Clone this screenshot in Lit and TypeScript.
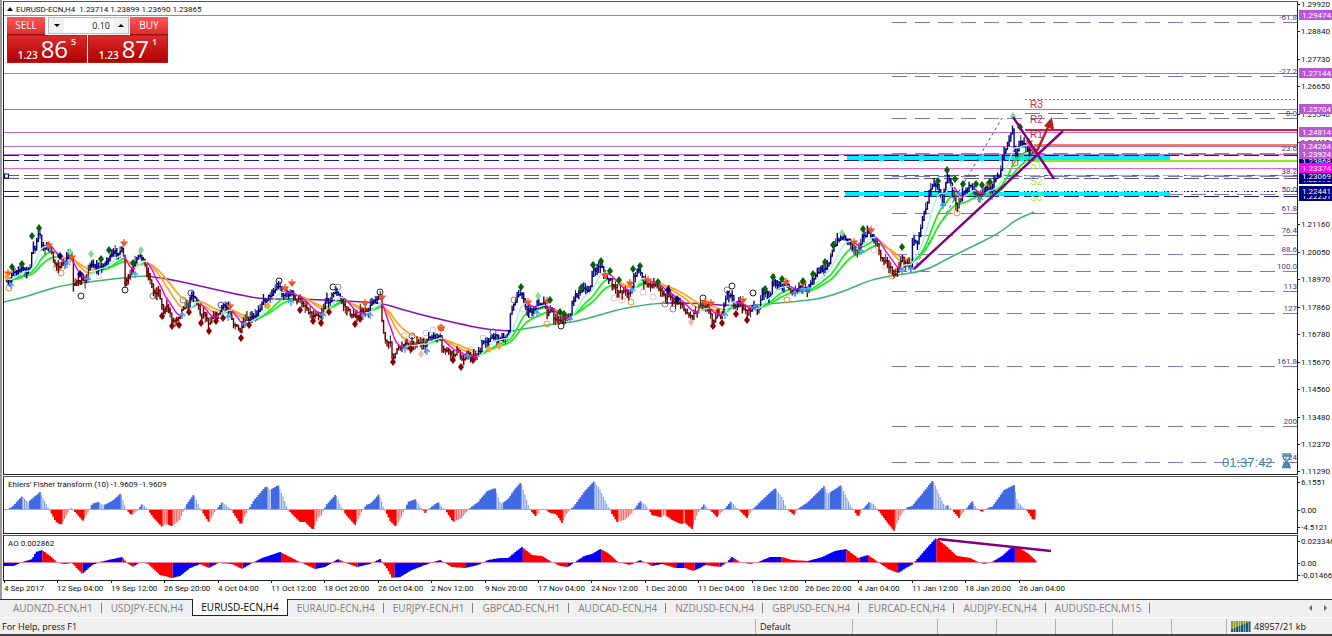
import { LitElement, html, svg, css } from "lit";
import { customElement } from "lit/decorators.js";

type Pt = [number, number];

const parse = (s: string): Pt[] =>
  s.trim().split(/\s+/).map((p) => p.split(",").map(Number) as Pt);

const at = (pts: Pt[], x: number): number => {
  if (x <= pts[0][0]) return pts[0][1];
  for (let i = 1; i < pts.length; i++) {
    const [x0, y0] = pts[i - 1];
    const [x1, y1] = pts[i];
    if (x <= x1) return y0 + ((y1 - y0) * (x - x0)) / (x1 - x0 || 1);
  }
  return pts[pts.length - 1][1];
};

const smooth = (pts: Pt[]): string => {
  let d = `M${pts[0][0]} ${pts[0][1]}`;
  for (let i = 1; i < pts.length - 1; i++) {
    const [x, y] = pts[i];
    const [nx, ny] = pts[i + 1];
    d += `Q${x} ${y} ${(x + nx) / 2} ${(y + ny) / 2}`;
  }
  const last = pts[pts.length - 1];
  return `${d}L${last[0]} ${last[1]}`;
};

/* Width of one H4 bar. */
const STEP = 1.668;

const PRICE = parse(`4,278 10,282 12,272 22,268 28,273 31,265 32,245 35,250 39,232 42,245 47,248 50,245 53,262 59,265 63,267
69,255 72,258 73,283 80,283 83,279 86,280 91,262 97,268 101,268 108,260 115,253 123,250 125,285 128,280 133,268 141,253
145,265 150,278 154,293 159,290 163,312 168,307 173,322 180,315 184,305 188,307 192,293 197,300 201,317 204,312 209,323
213,315 218,317 222,307 230,308 233,323 241,332 245,321 255,317 262,303 268,298 279,285 283,295 292,293 295,300 300,300
307,308 313,317 316,312 321,317 325,302 330,300 335,291 340,297 347,310 354,317 360,313 368,313 373,300 380,295 383,330
386,343 390,343 393,357 398,350 405,343 412,345 418,342 425,348 427,338 442,338 442,348 448,352 453,355 458,350 461,360
467,355 473,357 480,353 483,342 493,338 508,337 510,317 514,302 522,292 525,308 533,312 538,302 545,303 548,317 551,307
554,317 561,320 570,318 573,300 578,292 590,289 593,272 602,265 605,277 610,280 615,290 628,292 632,292 633,277 640,270
643,282 653,285 660,287 665,298 669,293 673,302 680,302 683,308 691,317 697,310 702,303 708,308 713,322 717,312 722,318
727,293 732,297 735,307 740,303 747,313 753,307 758,310 761,298 765,293 770,295 773,283 782,285 787,285 793,293 800,288
808,290 813,280 820,270 828,265 833,250 840,236 848,239 857,252 862,238 868,233 877,243 880,257 887,262 893,272 898,272
902,255 905,265 911,265 912,243 918,242 920,235 922,220 927,203 930,188 933,183 938,185 943,202 947,177 952,187 957,207
963,192 970,183 975,193 982,197 988,183 992,195 995,177 1000,175 1003,155 1008,145 1013,128 1015,158 1020,143 1027,147
1032,150 1034,163`);

const LONG_A = parse("4,302 22,298 40,292 60,286 80,283 105,280 130,277 146,276");
const LONG_B = parse("146,276 165,278 200,286 240,295 262,299 300,299 345,301 382,303 400,309 430,317 465,325 490,330 514,331");
const LONG_C = parse("512,331 545,325 575,322 600,315 620,309 650,304 668,303");
const LONG_D = parse("665,303 690,303 720,305 757,306");
const LONG_E = parse("755,305 790,302 820,299 845,291 870,280 890,276 925,271 945,260 965,250 1000,233 1015,220 1034,212");

const FISHER = parse(`4,511 12,507 22,496 28,502 40,492 46,503 50,511 56,522 61,525 68,513 71,508 74,511 83,521 88,513 92,504
98,502 104,505 112,501 121,493 126,509 131,515 138,510 142,504 147,508 152,516 162,527 166,524 172,526 180,520 186,505
194,494 200,508 209,523 215,512 222,502 230,508 241,525 248,510 254,500 266,486 270,490 278,485 284,498 288,510 300,522
305,522 313,530 318,518 322,515 326,505 336,494 342,508 346,515 355,525 361,514 366,505 371,503 379,494 384,508 390,521
396,527 402,516 408,502 415,499 421,507 425,513 430,508 438,502 446,511 453,522 462,518 470,508 478,502 487,491 495,488
501,504 508,499 514,490 521,482 527,500 530,510 536,517 541,509 545,509 550,513 556,514 562,523 568,512 574,506 584,492
594,481 600,489 608,506 612,514 617,522 625,520 632,513 640,501 646,505 652,515 660,517 665,515 672,520 681,524 685,523
692,529 698,513 704,504 709,509 717,517 724,510 731,501 738,509 747,518 753,509 762,500 775,488 783,498 787,509 794,515
799,508 808,502 824,486 828,494 841,485 850,504 858,517 863,509 869,502 874,504 878,510 886,521 894,531 901,515 906,508
912,506 933,480 940,496 945,506 948,505 952,510 959,518 964,512 972,501 977,508 982,512 986,509 990,507 992,507 1004,490
1014,485 1018,502 1023,507 1028,512 1033,520 1036,518`);

const AO = parse(`4,566 14,566 22,562 32,559 36,552 42,550 50,556 58,563 65,564 72,563 82,574 92,565 100,562 108,560 122,557
128,564 133,567 140,562 148,564 160,575 172,578 180,576 190,568 200,564 209,568 218,563 232,564 242,569 252,563 262,558
280,552 290,557 300,562 315,569 325,567 338,559 346,563 357,567 370,564 380,559 388,570 392,578 400,577 412,570 425,565
440,560 452,567 465,568 478,565 488,560 500,558 508,558 514,553 522,547 532,555 542,556 550,561 560,566 568,567 578,560
584,556 592,554 600,549 608,553 618,562 630,565 640,560 652,566 662,564 675,568 685,568 693,571 700,568 705,565 720,567
727,562 732,557 740,562 750,564 758,562 770,557 782,557 792,560 808,561 822,557 835,551 846,549 858,558 868,555 878,562
888,569 898,573 906,568 913,564 925,550 936,538 946,546 957,556 970,558 978,562 984,564 992,562 1002,556 1013,546
1023,550 1030,555 1036,561`);

/* Fractal diamonds, grouped by fill. */
const DIAMONDS: Record<string, Pt[]> = {
  "#006400": parse(`12,267 22,264 32,236 39,228 101,259 109,250 133,263 521,287 550,300 560,312 564,314 581,288 593,265
601,261 610,271 619,280 633,269 640,266 658,282 765,289 773,277 782,279 803,281 813,274 825,262 833,245 863,229 902,247
938,181 947,170 955,179 963,184 976,184 982,185 990,182 1020,127`),
  "#7ee08a": parse("70,252 91,254 141,250 538,296 842,233 1013,116"),
  "#00008b": parse("60,256 80,274 668,290 677,299"),
  "#8b0000": parse(`162,316 172,326 179,325 189,312 201,323 209,331 216,321 223,318 241,338 249,325 300,310 313,321
321,323 329,312 355,324 360,319 393,362 411,349 453,360 461,367 473,360 713,326 722,323 736,314 747,320`),
  "#ffa31a": parse("268,306 489,349 499,346 7,277"),
  "#ffb0b0": parse("421,354 691,322"),
};

const RINGS: Record<string, Pt[]> = {
  "#222": parse("81,296 125,290 279,281 333,287 380,292 561,326 703,298 732,286 753,293"),
  "#888": parse("153,296 338,287 183,300 514,300 665,304 673,309 727,290"),
  "#4a4ad8": parse("191,293 221,305 412,336 493,332"),
  "#f0902a": parse("61,273 9,288 547,324 631,302 787,300 892,276 957,213"),
  "#ffb9b9": parse("56,268 99,276 523,309 614,298 622,300 643,292 653,297 826,270 874,250 885,266"),
  "#a5dcc0": parse("404,336 427,342"),
  "#aed4e4": parse("426,333 433,330 483,338 470,350"),
  "#ee3b2b": parse("531,315 1015,163 441,328"),
};

const DOWN = parse(`8,273 49,245 72,257 124,243 230,306 285,288 292,283 365,303 382,297 441,328 528,302 547,301 605,275
630,283 648,280 705,302 711,303 743,300 786,282 803,283 854,242 871,230 989,184 1029,142 1034,150`);
const UP = parse(`11,286 67,265 88,280 135,275 182,316 228,318 245,325 291,303 323,316 363,317 370,316 405,350 427,352
468,357 537,314 570,320 632,291 725,316 755,308 795,294 803,291 808,290 861,252 902,271 911,270 943,206 980,200 992,197`);

/* Fibonacci levels: y of the line and its caption. */
const FIBS: [number, string][] = [
  [22, "-61.8"], [76, "-27.2"], [118, "0.0"], [153, "23.6"], [176, "38.2"], [194, "50.0"], [213, "61.8"], [235, "76.4"],
  [254, "88.6"], [271, "100.0"], [291, "113"], [313, "127"], [366, "161.8"], [426, "200"], [462, "224"],
];

const TICKS: [number, string][] = [
  [4, "1.29920"], [31, "1.28840"], [59, "1.27730"], [86, "1.26650"], [114, "1.25540"], [142, "1.24460"], [224, "1.21160"],
  [252, "1.20050"], [279, "1.18970"], [307, "1.17860"], [334, "1.16780"], [362, "1.15670"], [389, "1.14560"],
  [417, "1.13480"], [444, "1.12370"], [471, "1.11290"],
];

const TAGS: [number, string, string][] = [
  [196, "1.22251", "#000080"], [191, "1.22441", "#000080"], [179, "1.22978", "#000080"], [161, "1.23868", "#000080"],
  [176, "1.23069", "#000080"], [168, "1.23374", "#ff00ff"], [154, "1.23924", "#ba55d3"], [146, "1.24264", "#ba55d3"],
  [132, "1.24814", "#ba55d3"], [109, "1.25704", "#ba55d3"], [73, "1.27144", "#ba55d3"], [15, "1.29474", "#ba55d3"],
];

const DATES = ["4 Sep 2017", "12 Sep 04:00", "19 Sep 12:00", "26 Sep 20:00", "4 Oct 04:00", "11 Oct 12:00", "18 Oct 20:00",
  "26 Oct 04:00", "2 Nov 12:00", "9 Nov 20:00", "17 Nov 04:00", "24 Nov 12:00", "1 Dec 20:00", "11 Dec 04:00",
  "18 Dec 12:00", "26 Dec 20:00", "4 Jan 04:00", "11 Jan 12:00", "18 Jan 20:00", "26 Jan 04:00"];

const TABS = ["AUDNZD-ECN,H1", "USDJPY-ECN,H4", "EURUSD-ECN,H4", "EURAUD-ECN,H4", "EURJPY-ECN,H1", "GBPCAD-ECN,H1",
  "AUDCAD-ECN,H4", "NZDUSD-ECN,H4", "GBPUSD-ECN,H4", "EURCAD-ECN,H4", "AUDJPY-ECN,H4", "AUDUSD-ECN,M15"];

/* Builds candles and the moving-average ribbon from the price track. */
function build() {
  const bars: { x: number; y: number; top: number; bottom: number }[] = [];
  let seed = 7;
  const rnd = () => ((seed = (seed * 16807) % 2147483647) / 2147483647);
  for (let x = 5; x <= 1034; x += STEP) {
    const y = at(PRICE, x);
    const jitter = (rnd() - 0.5) * 5;
    bars.push({ x, y: y + jitter, top: y + jitter - 1 - rnd() * 6, bottom: y + jitter + 1 + rnd() * 6 });
  }
  const ema = (n: number) => {
    let a = bars[0].y + 4;
    let b = a;
    return bars.map((p) => {
      a += (p.y - a) * (2 / (n + 1));
      b += (a - b) * 0.3;
      return [p.x, b] as Pt;
    });
  };
  return { bars, fast: ema(5), mid: ema(14), slow: ema(25) };
}

/* Splits a line into runs so that rising and falling parts differ in colour. */
function runs(line: Pt[], up: string, down: string, width: number) {
  const out: { d: string; c: string }[] = [];
  let cur = "";
  line.forEach((p, i) => {
    if (!i) return;
    const prev = line[i - 1];
    const back = line[Math.max(0, i - 3)];
    const c = p[1] <= back[1] ? up : down;
    const to = `L${p[0].toFixed(1)} ${p[1].toFixed(1)}`;
    if (c !== cur) {
      out.push({ c, d: `M${prev[0].toFixed(1)} ${prev[1].toFixed(1)}${to}` });
      cur = c;
    } else out[out.length - 1].d += to;
  });
  return out.map((r) => svg`<path d=${r.d} fill="none" stroke=${r.c} stroke-width=${width}></path>`);
}

function candles() {
  const { bars, fast, mid, slow } = build();
  const paths: Record<string, string> = { "#000080": "", "#6e0000": "", "#3c3c3c": "" };
  let wicks = "";
  bars.forEach((b, i) => {
    if (!i) return;
    const p = bars[i - 1];
    const s = slow[i][1];
    const m = mid[i][1];
    const hi = Math.min(s, m);
    const lo = Math.max(s, m);
    const c = b.y < hi + 1 ? "#000080" : b.y > lo - 1 ? "#6e0000" : "#3c3c3c";
    paths[c] += `M${p.x.toFixed(1)} ${p.y.toFixed(1)}H${b.x.toFixed(1)}V${b.y.toFixed(1)}`;
    if (i % 3 === 0) wicks += `M${b.x.toFixed(1)} ${b.top.toFixed(1)}V${b.bottom.toFixed(1)}`;
    else paths[c] += `M${b.x.toFixed(1)} ${b.top.toFixed(1)}V${b.bottom.toFixed(1)}`;
  });
  return svg`
    ${runs(slow, "#14f014", "#ffa020", 1.7)}
    ${runs(mid, "#14f014", "#ffa020", 1.7)}
    <path d=${wicks} stroke="#222" stroke-width="1"></path>
    ${Object.keys(paths).map((c) => svg`<path d=${paths[c]} fill="none" stroke=${c} stroke-width="1.4"></path>`)}
    ${runs(fast, "#a8f0ee", "#f000dc", 1.4)}`;
}

function histogram(track: Pt[], base: number, kind: "fisher" | "ao") {
  const out: Record<string, string> = {};
  for (let x = 4; x <= 1035; x += STEP) {
    const y = at(track, x + 0.8);
    const prev = at(track, x + 0.8 - STEP);
    let c: string;
    let w = STEP + 0.1;
    if (kind === "fisher") {
      const fade = Math.abs(y - base) < Math.abs(prev - base) - 0.2;
      c = y < base ? (fade ? "#7f9cf0" : "#4169e1") : fade ? "#ff5a5a" : "#ff0000";
      if (fade) w = 1.1;
    } else c = y > prev ? "#ff0000" : "#0000ff";
    const top = Math.min(y, base);
    const h = Math.max(Math.abs(y - base), 0.6);
    out[c] = (out[c] || "") + `M${x.toFixed(2)} ${top.toFixed(1)}h${w.toFixed(2)}v${h.toFixed(1)}h-${w.toFixed(2)}z`;
  }
  return Object.keys(out).map((c) => svg`<path d=${out[c]} fill=${c}></path>`);
}

@customElement("app-root")
export class AppRoot extends LitElement {
  static styles = css`
    :host { display: block; min-height: 100vh; background: #f0f0f0; color: #111; font-family: "Open Sans", "Noto Sans", sans-serif; }
    * { box-sizing: border-box; }
    button, input { font-family: inherit; margin: 0; padding: 0; border: 0; border-radius: 0; }
    .app { display: flex; flex-direction: column; min-height: 100vh; border-bottom: 2px solid #444; }
    .workspace { background: #fff; border-left: 2px solid #999; padding: 1px 0 0 1px; }
    .pane { position: relative; display: grid; grid-template-columns: minmax(0, 1fr) 34px; }
    .plot { border: 1px solid #222; border-top-color: #555; overflow: hidden; }
    .plot > svg, .scale > svg { display: block; width: 100%; overflow: hidden; }
    .main .plot > svg { height: 472px; }
    .fisher, .ao { margin-top: 1px; }
    .fisher .plot > svg { height: 56px; }
    .ao .plot > svg { height: 44px; }
    .dates svg { display: block; width: 100%; height: 18px; }
    svg text { font-family: Roboto, "Open Sans", sans-serif; font-size: 8px; fill: #111; }
    svg .fib { fill: #483d8b; }
    svg .tag { fill: #fff; }
    svg .pivot { font-family: "Liberation Sans", sans-serif; font-size: 10px; }
    svg .res { fill: #d02848; }
    svg .sup-level { fill: #a4ec3c; }
    svg .clock { font-family: "Liberation Sans", sans-serif; font-size: 13px; fill: #3b87a8; }
    .crisp { shape-rendering: crispEdges; }

    .trade { position: absolute; left: 3px; top: 15px; width: 162px; height: 48px; background: #fff; display: grid; grid-template-columns: 80px 80px; gap: 1px; padding: 1px 0 0 1px; }
    .deal { display: flex; flex-direction: column; align-items: flex-start; background: none; color: #fff; cursor: pointer; }
    .deal.buy { align-items: flex-end; }
    .side { width: 38px; height: 18px; line-height: 17px; font-size: 10px; background: linear-gradient(#f55, #dc3030); border-bottom: 1px solid #a01010; }
    .quote { display: flex; justify-content: center; align-items: flex-end; gap: 3px; width: 80px; height: 28px; background: linear-gradient(#dc2a2a, #b00000); border: 1px solid #c01818; }
    .small { font-size: 10px; line-height: 14px; font-weight: 600; }
    .big { font-size: 24px; line-height: 26px; }
    .sup { font-size: 9px; line-height: 12px; align-self: flex-start; font-weight: 600; }
    .volume { position: absolute; left: 42px; top: 1px; display: flex; width: 81px; height: 17px; border: 1px solid #bbb; background: #fff; }
    .volume input { flex: 1; min-width: 0; font-size: 9px; text-align: right; padding-right: 3px; color: #111; }
    .volume button { width: 15px; background: #f0f0f0; display: grid; place-items: center; }

    .tabs { display: flex; align-items: stretch; height: 17px; border-top: 1px solid #333; padding-left: 4px; }
    .tab { position: relative; padding: 0 9px; font-size: 10px; line-height: 15px; color: #808080; background: none; white-space: nowrap; }
    .tab::after { content: ""; position: absolute; right: 0; top: 3px; height: 10px; border-right: 1px solid #808080; }
    .tab.on { background: #fff; color: #000; border: 1px solid #222; border-top: 0; margin-top: -1px; padding: 0 8px; line-height: 16px; }
    .tab.on::after, .tab.pre::after { display: none; }
    .arrows { margin-left: auto; display: flex; gap: 9px; align-items: center; padding-right: 4px; }
    .arrows button { width: 6px; height: 10px; background: none; display: grid; place-items: center; }
    .status { flex: 1; display: flex; align-items: center; font-size: 9px; color: #111; border-top: 1px solid #fafafa; margin-top: 1px; }
    .cell { height: 15px; line-height: 15px; border-left: 1px solid #b0b0b0; padding-left: 4px; display: flex; align-items: center; gap: 3px; white-space: nowrap; }
    .help { flex: 1; border: 0; padding-left: 2px; }
    .c97 { width: 97px; } .c85 { width: 85px; } .c59 { width: 59px; } .c57 { width: 57px; } .c55 { width: 55px; } .c106 { width: 106px; }
  `;

  private line(y: number, color: string, o: { from?: number; dash?: string; w?: number } = {}) {
    return svg`<line class="crisp" x1=${(o.from ?? 4) - 4} x2="100%" y1=${y + 0.5} y2=${y + 0.5} stroke=${color}
      stroke-width=${o.w ?? 1} stroke-dasharray=${o.dash ?? "none"}></line>`;
  }

  private mainPlot() {
    return svg`<svg role="img" aria-label="EURUSD-ECN H4 price chart">
      <g transform="translate(0 -2)">
        ${[15, 73, 109, 132, 146, 154].map((y) => this.line(y, "#ba6ad3"))}
        ${this.line(168, "#e060d8")}
        ${FIBS.map(([y]) => this.line(y, "#7f78b8", { from: 892, dash: "15 8" }))}
        <rect x="843" y="155" width="323" height="6" fill="#00f0ff"></rect>
        <rect x="841" y="192" width="325" height="4" fill="#00f0ff"></rect>
        ${[155, 160, 191, 196].map((y) => this.line(y, "#1c1c80", { dash: "15 5" }))}
        ${[175, 178].map((y) => this.line(y, "#54549c", { dash: "15 5" }))}
        ${this.line(99, "#dc4060", { from: 1025, dash: "2 2" })}
        ${this.line(113, "#dc4060", { from: 1025, dash: "15 8" })}
        ${this.line(129, "#e01838", { from: 1025, w: 2 })}
        ${this.line(144, "#f08050", { from: 1034, w: 2 })}
        ${this.line(160, "#90e820", { from: 1034, w: 2 })}
        ${this.line(175, "#9acd32", { from: 1025, dash: "15 8" })}
        ${this.line(191, "#adff2f", { from: 1025, dash: "2 2" })}
      </g>
      <g transform="translate(-4 -2)">
        <rect x="4.5" y="174" width="4" height="4" fill="#fff" stroke="#000080"></rect>
        ${[LONG_A, LONG_C, LONG_E].map((l) => svg`<path d=${smooth(l)} fill="none" stroke="#3cb371" stroke-width="1.5"></path>`)}
        ${[LONG_B, LONG_D].map((l) => svg`<path d=${smooth(l)} fill="none" stroke="#8a10b8" stroke-width="1.6"></path>`)}
        <path d="M913 270L1002 118" stroke="#4848a0" stroke-dasharray="3 3" stroke-width="1"></path>
        ${Object.keys(RINGS).map((c) => RINGS[c].map(([x, y]) => svg`<circle cx=${x} cy=${y} r="3" fill="none" stroke=${c} stroke-width="1"></circle>`))}
        ${candles()}
        ${UP.map(([x, y]) => svg`<path d="M${x} ${y + 3}V${y - 3}M${x - 3} ${y}L${x} ${y - 3}L${x + 3} ${y}" fill="none" stroke="#3c9cff" stroke-width="1.4"></path>`)}
        ${DOWN.map(([x, y]) => svg`<path d="M${x} ${y - 4}V${y}M${x - 3} ${y - 1}L${x} ${y + 3}L${x + 3} ${y - 1}Z" fill="#ff5a28" stroke="#f04e20" stroke-width="1.2"></path>`)}
        ${Object.keys(DIAMONDS).map((c) => DIAMONDS[c].map(([x, y]) => svg`<path d="M${x} ${y - 4}L${x + 3} ${y}L${x} ${y + 4}L${x - 3} ${y}Z" fill=${c}></path>`))}
        <path d="M914 269L1063 131M1013 117L1054 179" stroke="#800080" stroke-width="2.4" fill="none"></path>
        <path d="M1037 151L1049 125" stroke="#b22222" stroke-width="2.4"></path>
        <path d="M1052 117L1044 126L1054 130Z" fill="#b22222"></path>
        ${["R3", "R2", "R1"].map((t, i) => svg`<text class="pivot res" x="1030" y=${108 + i * 15}>${t}</text>`)}
        ${["S1", "S2", "S3"].map((t, i) => svg`<text class="pivot sup-level" x="1030" y=${169 + i * 16}>${t}</text>`)}
        <path d="M10 7L13 11H7Z" fill="#111"></path>
        <text x="16" y="12">EURUSD-ECN,H4&#160;&#160;1.23714 1.23899 1.23690 1.23865</text>
      </g>
      ${FIBS.map(([y, t]) => svg`<text class="fib" x="100%" y=${y - 4} text-anchor="end">${t}</text>`)}
      <svg x="100%" y="450" width="80" height="20" overflow="visible">
        <text class="clock" x="-75" y="15">01:37:42</text>
        <path d="M-15 2H-6M-15 4H-6M-14 4C-14 8 -11 8 -11 9.500S-14 11 -14 15M-7 4C-7 8 -10 8 -10 9.500S-7 11 -7 15M-15 15.500H-6M-13 14L-10.500 11L-8 14Z" fill="none" stroke="#3b87a8" stroke-width="1.3"></path>
      </svg>
    </svg>`;
  }

  private ticket() {
    return html`
      <div class="trade">
        <button class="deal" aria-label="Sell at 1.23865">
          <span class="side">SELL</span>
          <span class="quote"><span class="small">1.23</span><span class="big">86</span><span class="sup">5</span></span>
        </button>
        <button class="deal buy" aria-label="Buy at 1.23871">
          <span class="side">BUY</span>
          <span class="quote"><span class="small">1.23</span><span class="big">87</span><span class="sup">1</span></span>
        </button>
        <div class="volume">
          <button aria-label="Decrease volume"><svg width="6" height="3"><path d="M0 0H6L3 3Z"></path></svg></button>
          <input aria-label="Volume" .value=${"0.10"} />
          <button aria-label="Increase volume"><svg width="6" height="3"><path d="M0 3H6L3 0Z"></path></svg></button>
        </div>
      </div>`;
  }

  private scale(h: number, rows: [number, string][], top: number, tags: [number, string, string][] = []) {
    return html`<div class="scale"><svg height=${h}>
      <g transform="translate(0 ${-top})">
        ${rows.map(([y, t]) => svg`<path class="crisp" d="M0 ${y}.5H2" stroke="#222"></path><text x="3" y=${y + 3}>${t}</text>`)}
        ${tags.map(([y, t, c]) => svg`<rect x="1" y=${y - 5} width="33" height="10" fill=${c}></rect><text class="tag" x="4" y=${y + 3}>${t}</text>`)}
      </g></svg></div>`;
  }

  render() {
    return html`
      <div class="app">
        <main class="workspace">
          <section class="pane main">
            <div class="plot">${this.mainPlot()}</div>
            ${this.scale(474, TICKS, 1, TAGS)}
            ${this.ticket()}
          </section>
          <section class="pane fisher">
            <div class="plot"><svg role="img" aria-label="Fisher transform"><g transform="translate(-4 -477)">
              ${histogram(FISHER, 509.5, "fisher")}
              <path class="crisp" d="M4 509.5H1036" stroke="#a0a8d8"></path>
              <text x="8" y="487">Ehlers' Fisher transform (10) -1.9609 -1.9609</text>
            </g></svg></div>
            ${this.scale(58, [[482, "6.1551"], [510, "0.00"], [527, "-4.5121"]], 476)}
          </section>
          <section class="pane ao">
            <div class="plot"><svg role="img" aria-label="Awesome oscillator"><g transform="translate(-4 -536)">
              ${histogram(AO, 562.5, "ao")}
              <path class="crisp" d="M4 562.5H1036" stroke="#f080a0"></path>
              <path d="M938 539L1051 551" stroke="#800080" stroke-width="2.4"></path>
              <text x="8" y="546">AO 0.002862</text>
            </g></svg></div>
            ${this.scale(46, [[541, "0.023346"], [563, "0.00"], [575, "-0.014665"]], 535)}
          </section>
          <div class="dates"><svg role="img" aria-label="Time axis">
            ${DATES.map((d, i) => {
              const x = Math.round(1 + i * 53.4);
              return svg`<path class="crisp" d="M${x}.5 0V2" stroke="#222"></path><text x=${x} y="10">${d}</text>`;
            })}
          </svg></div>
        </main>
        <nav class="tabs" aria-label="Charts">
          ${TABS.map((t, i) => html`<button class="tab ${i === 2 ? "on" : ""} ${i === 1 ? "pre" : ""}">${t}</button>`)}
          <div class="arrows">
            <button aria-label="Previous tabs"><svg width="3" height="6"><path d="M3 0V6L0 3Z" fill="#666"></path></svg></button>
            <button aria-label="Next tabs"><svg width="3" height="6"><path d="M0 0V6L3 3Z" fill="#666"></path></svg></button>
          </div>
        </nav>
        <footer class="status">
          <div class="cell help">For Help, press F1</div>
          <div class="cell c97">Default</div>
          <div class="cell c85"></div>
          <div class="cell c59"></div>
          <div class="cell c59"></div>
          <div class="cell c57"></div>
          <div class="cell c59"></div>
          <div class="cell c55"></div>
          <div class="cell c106">
            <svg width="20" height="12" aria-hidden="true">
              ${[0, 1, 2, 3, 4, 5, 6, 7].map((i) => svg`<rect x=${i * 2.5} y="1" width="2" height=${8 - i} fill="#8aa030"></rect><rect x=${i * 2.5} y=${9 - i} width="2" height=${3 + i} fill="#1c5a70"></rect>`)}
            </svg>48957/21 kb</div>
        </footer>
      </div>`;
  }
}
